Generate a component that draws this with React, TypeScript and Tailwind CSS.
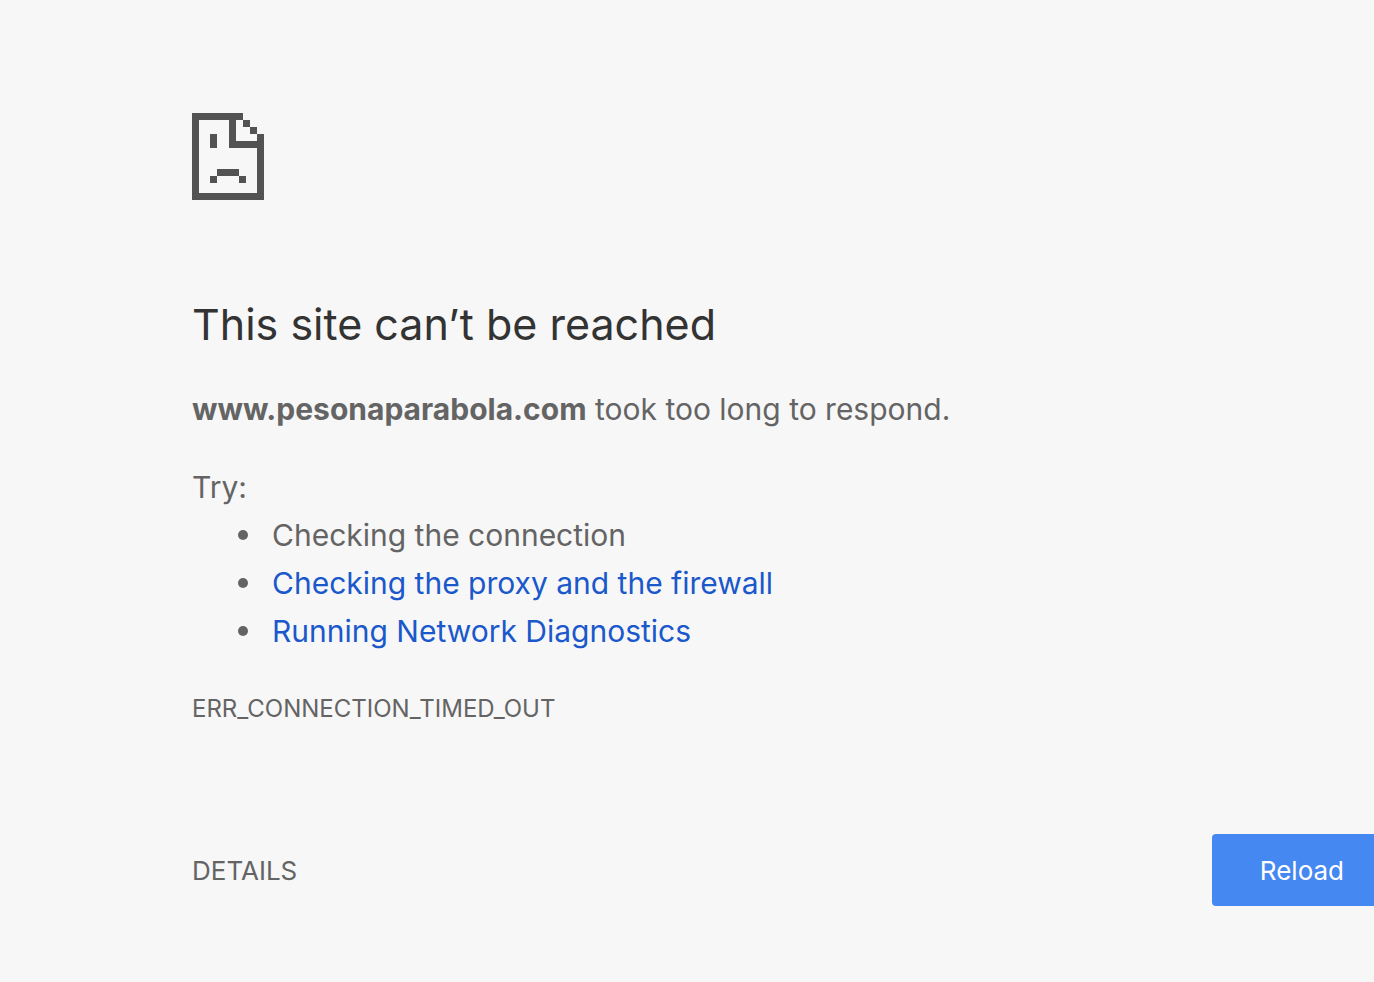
const suggestions = [
  { label: "Checking the connection" },
  { label: "Checking the proxy and the firewall", href: "#proxy" },
  { label: "Running Network Diagnostics", href: "#diagnostics" },
];

function SadPageIcon() {
  return (
    <svg
      className="h-[87px] w-[72px] text-[#535353]"
      viewBox="0 0 72 87"
      fill="currentColor"
      shapeRendering="crispEdges"
      aria-hidden="true"
    >
      <path d="M0 0H51V7H7V80H65V35H37V7H44V28H65V21H72V87H0Z" />
      <path d="M51 7H58V14H51ZM58 14H65V21H58Z" />
      <path d="M18 21H25V35H18ZM25 56H47V63H25ZM18 63H25V70H18ZM47 63H54V70H47Z" />
    </svg>
  );
}

export default function App() {
  return (
    <div className="min-h-screen overflow-x-hidden bg-[#f7f7f7] font-[Inter,sans-serif] text-[#646464]">
      <main className="ml-48 pt-[113px]">
        <SadPageIcon />
        <h1 className="mt-24 text-[43px] leading-[56px] text-[#333]">
          This site can’t be reached
        </h1>
        <p className="mt-[33px] text-3xl leading-[48px]">
          <strong className="font-bold">www.pesonaparabola.com</strong> took too long to respond.
        </p>
        <div className="mt-[30px] text-3xl leading-[48px]">
          <p>Try:</p>
          <ul className="pl-[46px]">
            {suggestions.map((item) => (
              <li
                key={item.label}
                className="flex items-center gap-6 before:size-[10px] before:shrink-0 before:rounded-full before:bg-[#646464]"
              >
                {item.href ? (
                  <a href={item.href} className="text-[#1a58cb]">
                    {item.label}
                  </a>
                ) : (
                  item.label
                )}
              </li>
            ))}
          </ul>
        </div>
        <p className="mt-[30px] text-2xl leading-[48px]">ERR_CONNECTION_TIMED_OUT</p>
        {/* the action row runs past the right edge of the window */}
        <div className="-mr-[18px] mt-[101px] flex items-center justify-between pb-19">
          <button type="button" className="text-[26px]">
            DETAILS
          </button>
          <button
            type="button"
            className="h-18 rounded-[4px] bg-[#4688f1] px-12 text-[26px] text-white"
          >
            Reload
          </button>
        </div>
      </main>
    </div>
  );
}
